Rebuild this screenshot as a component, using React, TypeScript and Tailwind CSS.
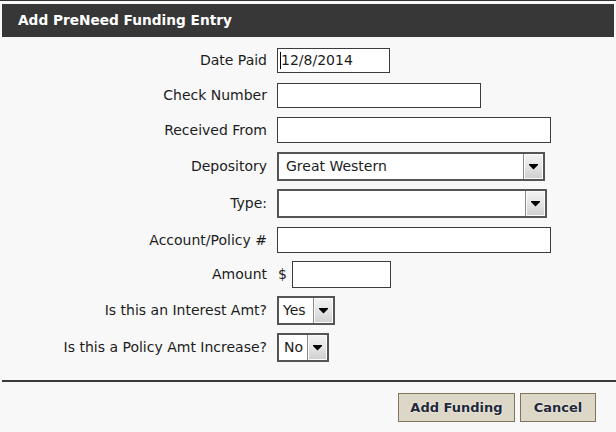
import type { ReactNode } from "react";

function Label({ children }: { children: ReactNode }) {
  return <div className="w-[267px] shrink-0 text-right whitespace-nowrap">{children}</div>;
}

function TextBox({ w, h, value }: { w: string; h: string; value?: string }) {
  return (
    <div className={`${w} ${h} flex items-center border border-[#3c3c3c] bg-white pl-[2px]`}>
      {value && (
        <>
          <span className="w-px h-[17px] bg-black" />
          <span>{value}</span>
        </>
      )}
    </div>
  );
}

function DropDown({ w, value, pad }: { w: string; value?: string; pad: string }) {
  return (
    <div className={`${w} h-[29px] flex border-2 border-[#555] bg-white`}>
      <div className={`flex-1 flex items-center ${pad} overflow-hidden whitespace-nowrap`}>{value}</div>
      <div className="w-[20px] flex items-center justify-center border-l border-[#8a8a8a]">
        <div className="w-full h-full flex items-center justify-center border border-[#fbfbfb] bg-gradient-to-b from-[#f2f2f2] via-[#e4e4e4] to-[#d0d0d0]">
          <svg width="9" height="6" viewBox="0 0 9 6">
            <path d="M0 0h9v1L4.5 5.5L0 1z" fill="#000" />
          </svg>
        </div>
      </div>
    </div>
  );
}

function Row({ label, mt, children }: { label: string; mt: string; children: ReactNode }) {
  return (
    <div className={`flex items-center gap-[10px] ${mt}`}>
      <Label>{label}</Label>
      {children}
    </div>
  );
}

export default function App() {
  return (
    <div
      className="w-[616px] h-[432px] bg-[#f8f8f8] text-[14px] text-[#1c1c1c] border-t border-[#333] overflow-hidden"
      style={{ fontFamily: '"DejaVu Sans", Verdana, sans-serif' }}
    >
      <div className="mx-[2px] mt-[3px] h-[33px] bg-[#373737] flex items-center pl-4 text-white font-bold text-[13.7px]">
        Add PreNeed Funding Entry
      </div>

      <div className="flex flex-col pt-[11px]">
        <Row label="Date Paid" mt="mt-0">
          <TextBox w="w-[113px]" h="h-[25px]" value="12/8/2014" />
        </Row>
        <Row label="Check Number" mt="mt-[10px]">
          <TextBox w="w-[204px]" h="h-[25px]" />
        </Row>
        <Row label="Received From" mt="mt-[9px]">
          <TextBox w="w-[274px]" h="h-[26px]" />
        </Row>
        <Row label="Depository" mt="mt-[9px]">
          <DropDown w="w-[268px]" value="Great Western" pad="pl-[7px]" />
        </Row>
        <Row label="Type:" mt="mt-[8px]">
          <DropDown w="w-[270px]" pad="pl-[7px]" />
        </Row>
        <Row label="Account/Policy #" mt="mt-[9px]">
          <TextBox w="w-[274px]" h="h-[26px]" />
        </Row>
        <Row label="Amount" mt="mt-[8px]">
          <div className="flex items-center gap-[5px]">
            <span className="pl-px">$</span>
            <TextBox w="w-[99px]" h="h-[27px]" />
          </div>
        </Row>
        <Row label="Is this an Interest Amt?" mt="mt-[8px]">
          <DropDown w="w-[58px]" value="Yes" pad="pl-[4px]" />
        </Row>
        <Row label="Is this a Policy Amt Increase?" mt="mt-[8px]">
          <DropDown w="w-[52px]" value="No" pad="pl-[5px]" />
        </Row>
      </div>

      <div className="ml-[2px] mt-[18px] h-[2px] bg-[#3a3a3a]" />

      <div className="flex justify-end gap-[5px] pr-[20px] mt-[11px]">
        <button className="w-[117px] h-[29px] bg-[#dcd7c7] border border-[#7e7658] font-bold text-[13px] text-[#222838] [text-shadow:0_0_2px_#fff]">
          Add Funding
        </button>
        <button className="w-[76px] h-[29px] bg-[#dcd7c7] border border-[#7e7658] font-bold text-[13px] text-[#222838] [text-shadow:0_0_2px_#fff]">
          Cancel
        </button>
      </div>
    </div>
  );
}
